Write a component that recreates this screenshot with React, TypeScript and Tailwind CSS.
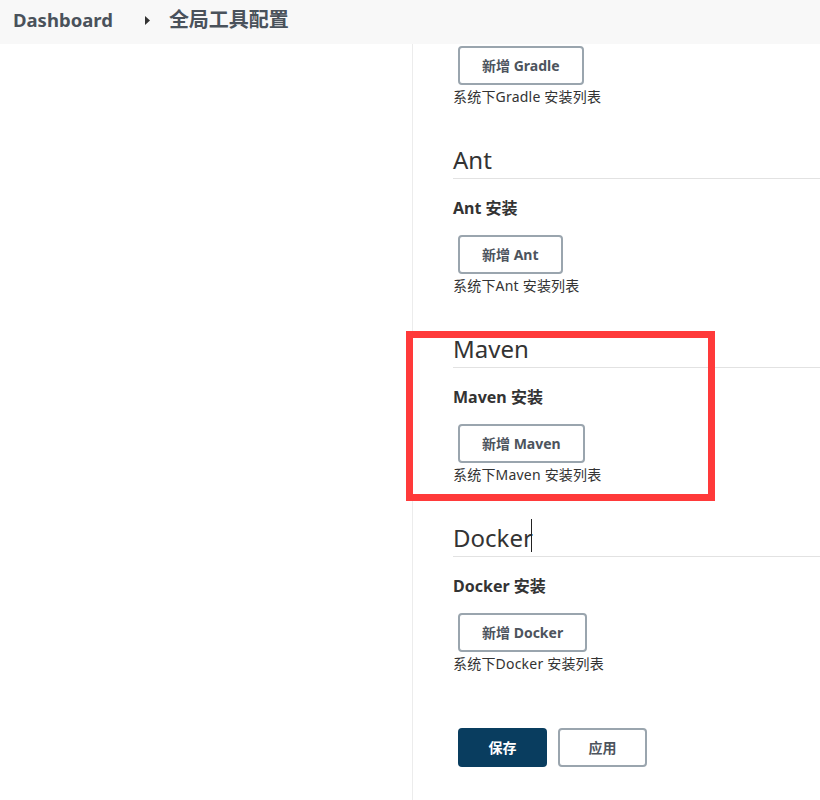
import React from "react";

const font = "font-['Noto_Sans','Noto_Sans_CJK_SC',sans-serif]";

function AddButton({ label }: { label: string }) {
  return (
    <button className="ml-[5px] h-[39px] rounded-[4px] border-2 border-[#9aa5ae] bg-white px-[22px] text-[14px] font-bold text-[#4d545d]">
      {label}
    </button>
  );
}

function Desc({ name }: { name: string }) {
  return (
    <div className="mt-[2px] text-[14px] leading-[20px] tracking-[0.2px] text-[#333]">系统下{name} 安装列表</div>
  );
}

function Section({ name, cursor }: { name: string; cursor?: boolean }) {
  return (
    <div className="mt-[37px]">
      <h2 className="flex h-[35px] items-start border-b border-[#e2e2e2] pb-[2px] text-[24px] leading-[32px] text-[#333]">
        {name}
        {cursor && <span className="ml-[-2px] mt-[-3px] inline-block h-[33px] w-px bg-[#222]" />}
      </h2>
      <div className="mt-[17px] text-[16px] font-bold leading-[24px] text-[#333]">{name} 安装</div>
      <div className="mt-[15px]">
        <AddButton label={`新增 ${name}`} />
      </div>
      <Desc name={name} />
    </div>
  );
}

export default function App() {
  return (
    <div className={`relative flex min-h-[800px] flex-col bg-white ${font}`}>
      <header className="flex h-[44px] items-center bg-[#f8f8f8] pb-[4px] pl-[13px]">
        <span className="text-[18.5px] font-bold text-[#4a525b]">Dashboard</span>
        <svg className="ml-[32px]" width="6" height="9" viewBox="0 0 6 9">
          <path d="M0 0 L5 4.5 L0 9 Z" fill="#333" />
        </svg>
        <span className="ml-[18px] text-[20px] font-bold text-[#4a525b]">全局工具配置</span>
      </header>
      <div className="flex flex-1">
        <aside className="w-[413px] shrink-0 border-r border-[#ececec]" />
        <main className="flex-1 pl-[40px] pt-[2px]">
          <AddButton label="新增 Gradle" />
          <Desc name="Gradle" />
          <Section name="Ant" />
          <Section name="Maven" />
          <Section name="Docker" cursor />
          <div className="mt-[54px] flex gap-[11px] pl-[5px]">
            <button className="h-[39px] w-[89px] rounded-[4px] bg-[#093d5f] text-[14px] font-bold text-white">保存</button>
            <button className="h-[39px] w-[89px] rounded-[4px] border-2 border-[#9aa5ae] bg-white text-[14px] font-bold text-[#4d545d]">应用</button>
          </div>
        </main>
      </div>
      <div className="pointer-events-none absolute left-[406px] top-[331px] h-[170px] w-[309px] border-[7px] border-[#ff3a3a]" />
    </div>
  );
}
